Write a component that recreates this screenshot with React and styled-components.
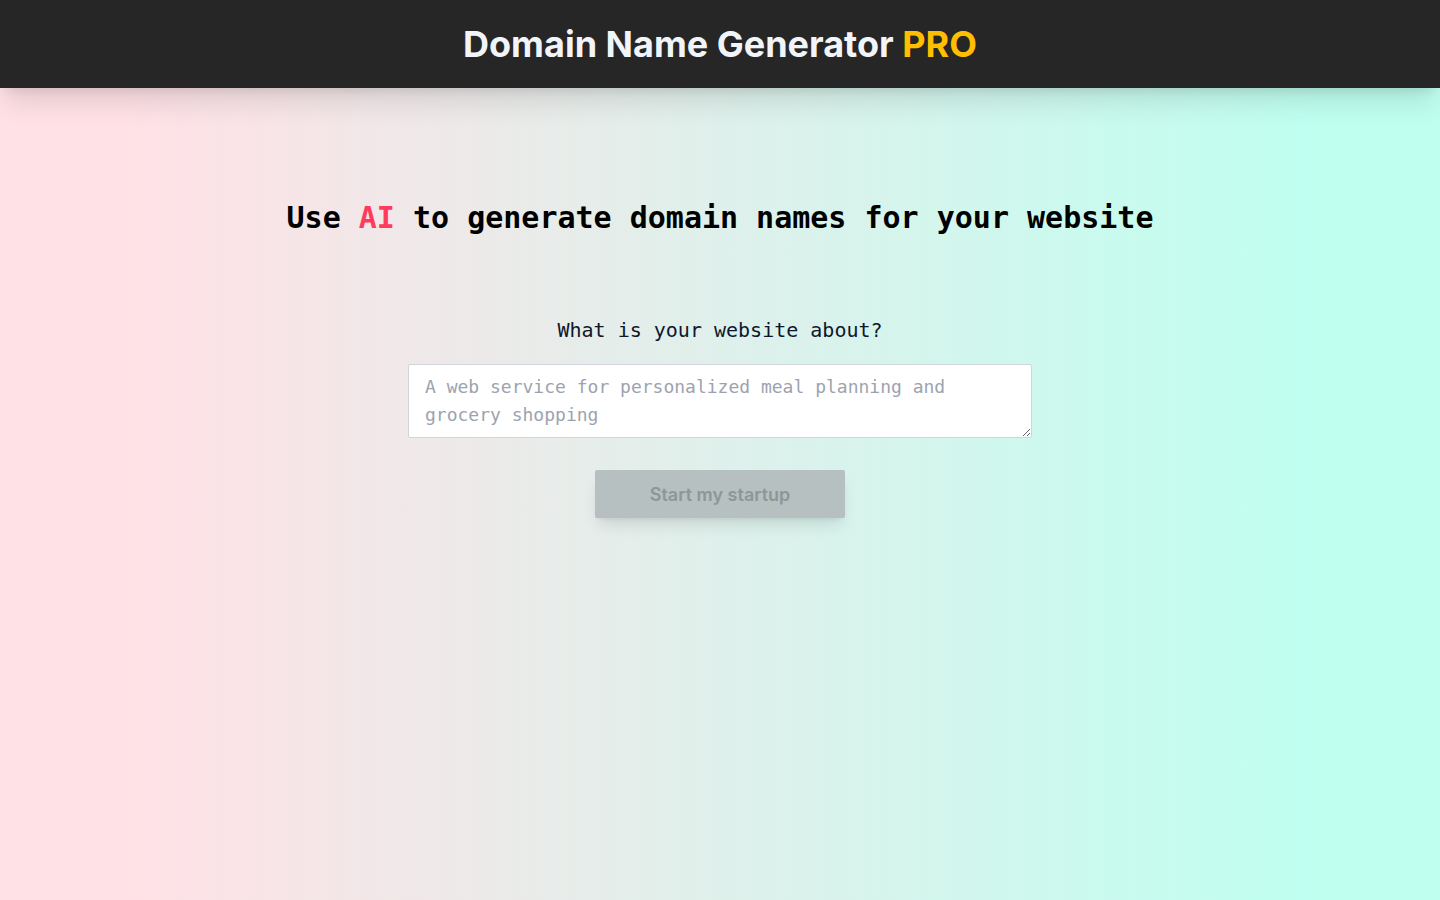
import React, { useState } from 'react';
import styled, { createGlobalStyle } from 'styled-components';

const GlobalStyle = createGlobalStyle`
  html, body {
    margin: 0;
    padding: 0;
  }
  body {
    min-height: 100vh;
    font-family: Inter, "Noto Sans", sans-serif;
  }
  * {
    box-sizing: border-box;
  }
`;

const Page = styled.div`
  min-height: 100vh;
  display: flex;
  flex-direction: column;
  background: linear-gradient(to right, #ffe1e6 9%, #bffff0 91%);
`;

const Header = styled.header`
  height: 88px;
  background: #262626;
  display: flex;
  justify-content: center;
  align-items: center;
  box-shadow: 0 20px 25px -5px rgba(0, 0, 0, 0.1), 0 8px 10px -6px rgba(0, 0, 0, 0.1);
  position: relative;
  z-index: 1;
`;

const Brand = styled.h1`
  margin: 0;
  font-family: Inter, sans-serif;
  font-weight: 700;
  font-size: 36px;
  color: #f1f5f9;
`;

const Accent = styled.span`
  color: ${p => p.color};
`;

const Main = styled.main`
  display: flex;
  flex-direction: column;
  align-items: center;
  padding-top: 112px;
  font-family: "DejaVu Sans Mono", monospace;
`;

const Headline = styled.h2`
  margin: 0;
  font-size: 30px;
  font-weight: 700;
  line-height: 36px;
  color: #000;
`;

const Form = styled.form`
  display: flex;
  flex-direction: column;
  align-items: center;
  margin-top: 80px;
`;

const Label = styled.label`
  font-size: 20px;
  line-height: 28px;
  color: #0f172a;
`;

const TextArea = styled.textarea`
  margin-top: 20px;
  width: 624px;
  height: 74px;
  padding: 8px 16px;
  font-family: "DejaVu Sans Mono", monospace;
  font-size: 18px;
  line-height: 28px;
  border: 1px solid #d1d5db;
  border-radius: 2px;
  background: #fff;
  color: #111827;
  outline: none;

  &::placeholder {
    color: #9ca3af;
  }
`;

const Button = styled.button`
  margin-top: 32px;
  width: 250px;
  height: 48px;
  border: none;
  border-radius: 2px;
  background: #b6c0c0;
  color: #8c9797;
  font-family: Inter, sans-serif;
  font-size: 18px;
  font-weight: 600;
  box-shadow: 0 10px 15px -3px rgba(0, 0, 0, 0.1), 0 4px 6px -4px rgba(0, 0, 0, 0.1);
  cursor: not-allowed;
`;

export default function App() {
  const [about, setAbout] = useState('');

  return (
    <Page>
      <GlobalStyle />
      <Header>
        <Brand>
          Domain Name Generator <Accent color="#ffbf00">PRO</Accent>
        </Brand>
      </Header>
      <Main>
        <Headline>
          Use <Accent color="#ff3b5c">AI</Accent> to generate domain names for your website
        </Headline>
        <Form onSubmit={e => e.preventDefault()}>
          <Label htmlFor="about">What is your website about?</Label>
          <TextArea
            id="about"
            value={about}
            onChange={e => setAbout(e.target.value)}
            placeholder="A web service for personalized meal planning and grocery shopping"
          />
          <Button type="submit" disabled={!about}>
            Start my startup
          </Button>
        </Form>
      </Main>
    </Page>
  );
}
